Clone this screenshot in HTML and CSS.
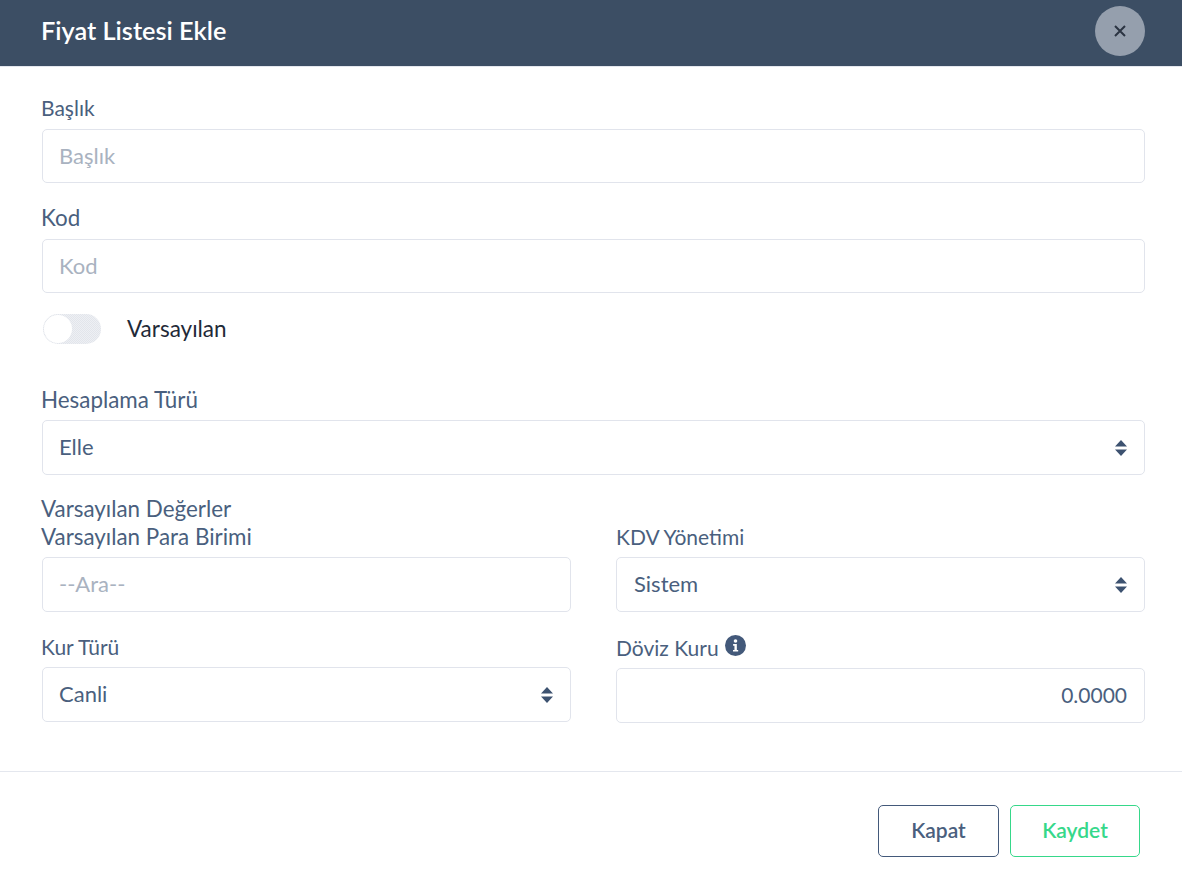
FILE: index.html
```html
<!DOCTYPE html>
<html lang="tr">
<head>
    <meta charset="UTF-8">
    <meta name="viewport" content="width=device-width, initial-scale=1.0">
    <title>Fiyat Listesi Ekle</title>
    <link rel="stylesheet" href="styles.css">
</head>
<body>
    <div class="modal">
        <div class="modal-header">
            <h1>Fiyat Listesi Ekle</h1>
            <button class="close-button" type="button" aria-label="Kapat">
                <svg width="12" height="12" viewBox="0 0 12 12"><path d="M1 1l10 10M11 1L1 11" stroke="#2b3442" stroke-width="2" fill="none"/></svg>
            </button>
        </div>

        <div class="modal-body">
            <div class="field">
                <label class="label-small">Başlık</label>
                <input class="text-input" type="text" placeholder="Başlık">
            </div>
            <div class="field">
                <label>Kod</label>
                <input class="text-input" type="text" placeholder="Kod">
            </div>

            <div class="toggle-row">
                <span class="toggle"><span class="toggle-knob"></span></span>
                <span class="toggle-label">Varsayılan</span>
            </div>

            <div class="field field-tall">
                <label>Hesaplama Türü</label>
                <div class="select-box">
                    <span>Elle</span>
                    <svg class="select-arrows" width="12" height="16" viewBox="0 0 12 16"><path d="M6 0l6 6.5H0zM6 16l6-6.5H0z" fill="#3d5270"/></svg>
                </div>
            </div>

            <div class="section-title">Varsayılan Değerler</div>

            <div class="form-grid">
                <div class="field field-tall">
                    <label>Varsayılan Para Birimi</label>
                    <input class="text-input" type="text" placeholder="--Ara--">
                </div>
                <div class="field field-tall">
                    <label class="label-small">KDV Yönetimi</label>
                    <div class="select-box">
                        <span>Sistem</span>
                        <svg class="select-arrows" width="12" height="16" viewBox="0 0 12 16"><path d="M6 0l6 6.5H0zM6 16l6-6.5H0z" fill="#3d5270"/></svg>
                    </div>
                </div>
                <div class="field field-tall">
                    <label class="label-small">Kur Türü</label>
                    <div class="select-box">
                        <span>Canli</span>
                        <svg class="select-arrows" width="12" height="16" viewBox="0 0 12 16"><path d="M6 0l6 6.5H0zM6 16l6-6.5H0z" fill="#3d5270"/></svg>
                    </div>
                </div>
                <div class="field field-tall">
                    <label class="label-small label-info">Döviz Kuru
                        <svg class="info-icon" width="21" height="21" viewBox="0 0 22 22"><circle cx="11" cy="11" r="11" fill="#43597a"/><circle cx="11" cy="6.3" r="1.9" fill="#fff"/><path d="M8.5 9.4h3.9v6.2h1.4v1.8H8.4v-1.8h1.5v-4.4H8.5z" fill="#fff"/></svg>
                    </label>
                    <input class="text-input number-input" type="text" value="0.0000">
                </div>
            </div>
        </div>

        <div class="modal-footer">
            <button class="btn btn-close" type="button">Kapat</button>
            <button class="btn btn-save" type="button">Kaydet</button>
        </div>
    </div>
</body>
</html>
```

FILE: styles.css
```css
* {
    box-sizing: border-box;
}

body {
    margin: 0;
    background-color: #fff;
    font-family: "Lato", "Noto Sans", sans-serif;
    color: #4a5f7e;
    font-size: 22px;
}

.modal-header {
    height: 67px;
    background-color: #3c4e64;
    border-bottom: 1px solid #e4e7ee;
    padding: 0 37px 4px 41px;
    display: flex;
    align-items: center;
    justify-content: space-between;
}

.modal-header h1 {
    margin: 0;
    padding-bottom: 2px;
    font-size: 25.3px;
    font-weight: 600;
    color: #fff;
}

.close-button {
    width: 50px;
    height: 50px;
    border: none;
    border-radius: 50%;
    background-color: #959fad;
    display: flex;
    align-items: center;
    justify-content: center;
    padding: 0;
}

.modal-body {
    padding: 30px 37px 0 42px;
    height: 705px;
    border-bottom: 1px solid #e4e7ee;
}

.field {
    margin-bottom: 24px;
}

.field label {
    display: block;
    height: 24px;
    line-height: 22px;
    font-size: 22.4px;
    margin: 0 0 8px -1px;
}

.field .label-small {
    font-size: 21px;
}

.field-tall label {
    margin-bottom: 7px;
}

.form-grid .field:nth-child(even) label {
    margin-left: 0;
}

.text-input {
    display: block;
    width: 100%;
    height: 54px;
    border: 1px solid #e1e4ec;
    border-radius: 5px;
    padding: 0 17px 2px 16px;
    font-family: inherit;
    font-size: 22px;
    color: #4a5f7e;
    outline: none;
}

.text-input::placeholder {
    color: #a9b2c0;
    opacity: 1;
}

.field-tall .text-input {
    height: 55px;
}

.number-input {
    text-align: right;
    font-size: 21px;
}

.toggle-row {
    display: flex;
    align-items: center;
    height: 30px;
    margin: -3px 0 45px 1px;
}

.toggle {
    width: 58px;
    height: 30px;
    border-radius: 15px;
    background-color: #e6e9ef;
    background-image: repeating-conic-gradient(#e2e5eb 0 25%, #eef0f4 0 50%);
    background-size: 2px 2px;
    padding: 1px;
    margin-right: 26px;
}

.toggle-knob {
    display: block;
    width: 28px;
    height: 28px;
    border-radius: 50%;
    background-color: #fff;
}

.toggle-label {
    color: #1f2a38;
    font-size: 22.5px;
    padding-bottom: 2px;
}

.select-box {
    height: 55px;
    border: 1px solid #e1e4ec;
    border-radius: 5px;
    padding: 0 17px 0 16px;
    display: flex;
    align-items: center;
    justify-content: space-between;
}

.form-grid .field:nth-child(even) .select-box {
    padding-left: 17px;
}

.select-box span {
    padding-bottom: 2px;
}

.select-arrows {
    flex: none;
}

.section-title {
    height: 24px;
    line-height: 22px;
    font-size: 22.4px;
    margin: -1px 0 4px -1px;
}

.form-grid {
    display: grid;
    grid-template-columns: 1fr 1fr;
    column-gap: 45px;
}

.label-info {
    display: flex !important;
    align-items: center;
}

.info-icon {
    margin: -5px 0 0 6px;
}

.field-tall .label-info {
    margin-bottom: 8px;
}

.modal-footer {
    display: flex;
    justify-content: flex-end;
    gap: 11px;
    padding: 33px 42px 0 0;
}

.btn {
    height: 52px;
    padding: 0 0 3px;
    background: #fff;
    border-radius: 5px;
    font-family: inherit;
    font-size: 21px;
    font-weight: 600;
}

.btn-close {
    width: 121px;
    border: 1px solid #43597a;
    color: #4a5f7e;
}

.btn-save {
    width: 130px;
    border: 1px solid #36d88a;
    color: #36d88a;
}
```
